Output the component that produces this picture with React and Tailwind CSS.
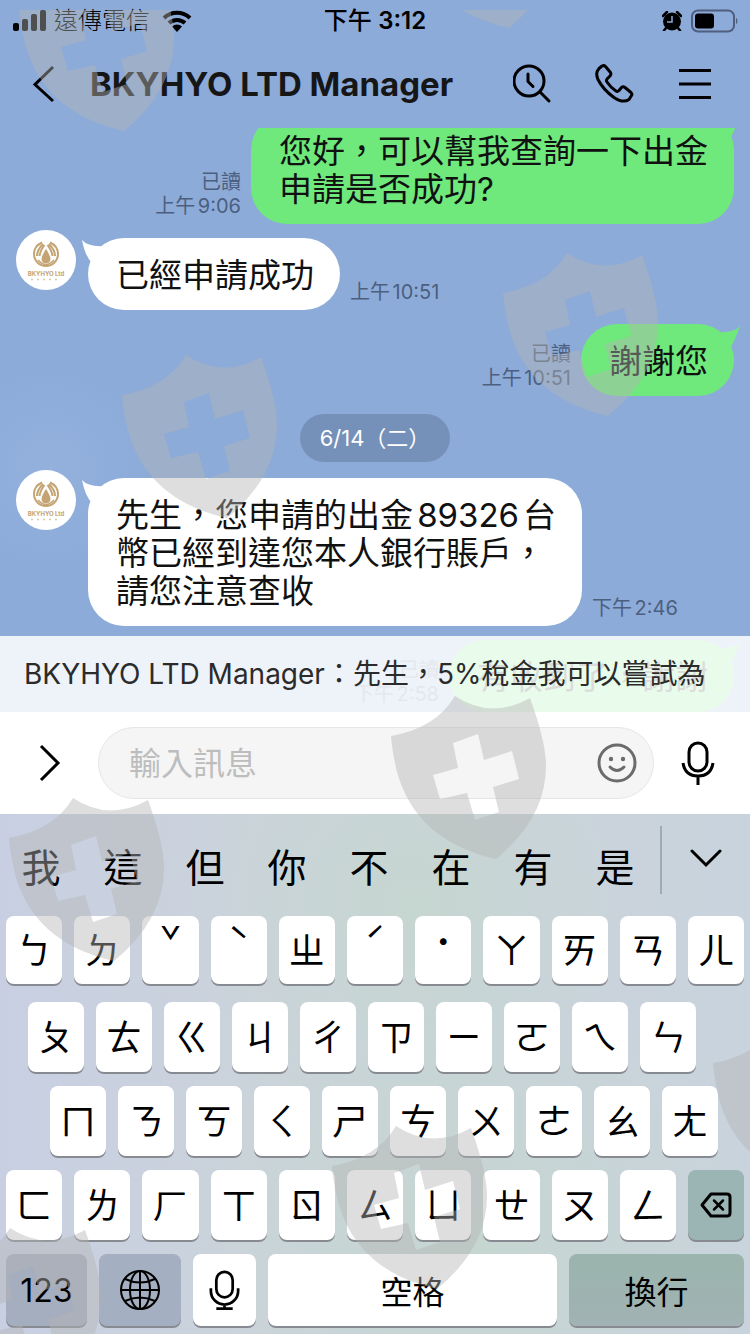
import React, { useState } from 'react';
import clsx from 'clsx';

const MESSAGES = [
  { id: 1, from: 'me', lines: ['您好，可以幫我查詢一下出金', '申請是否成功?'], time: '上午9:06' },
  { id: 2, from: 'manager', lines: ['已經申請成功'], time: '上午10:51' },
  { id: 3, from: 'me', lines: ['謝謝您'], time: '上午10:51' },
  { id: 4, date: '6/14（二）' },
  { id: 5, from: 'manager', lines: ['先生，您申請的出金89326台', '幣已經到達您本人銀行賬戶，', '請您注意查收'], time: '下午2:46' },
  { id: 6, from: 'me', lines: ['有收到了，謝謝'], time: '下午2:58' },
];

const CANDIDATES = ['我', '這', '但', '你', '不', '在', '有', '是'];

const KEY_ROWS = [
  ['ㄅ', 'ㄉ', 'ˇ', 'ˋ', 'ㄓ', 'ˊ', '˙', 'ㄚ', 'ㄞ', 'ㄢ', 'ㄦ'],
  ['ㄆ', 'ㄊ', 'ㄍ', 'ㄐ', 'ㄔ', 'ㄗ', 'ㄧ', 'ㄛ', 'ㄟ', 'ㄣ'],
  ['ㄇ', 'ㄋ', 'ㄎ', 'ㄑ', 'ㄕ', 'ㄘ', 'ㄨ', 'ㄜ', 'ㄠ', 'ㄤ'],
  ['ㄈ', 'ㄌ', 'ㄏ', 'ㄒ', 'ㄖ', 'ㄙ', 'ㄩ', 'ㄝ', 'ㄡ', 'ㄥ'],
];

// Tone marks sit near the top of their key
const TONES = ['ˇ', 'ˋ', 'ˊ', '˙'];

// Top left corner of every shield in the watermark
const SHIELDS = [
  [19, -42],
  [404, -145],
  [122, 345],
  [503, 243],
  [391, 686],
  [9, 788],
  [713, 1013],
  [332, 1116],
  [-54, 1218],
];

const StatusBar = () => (
  <div className="grid h-10 grid-cols-3 items-center px-3 pt-0.5">
    <div className="flex items-center">
      <svg className="h-6 w-[34px]" viewBox="0 0 34 24" fill="black">
        <rect x="1" y="14" width="6" height="8" rx="2" />
        <rect x="10" y="10" width="6" height="12" rx="2" />
        <rect x="19" y="5" width="6" height="17" rx="2" />
        <rect x="28" y="1" width="6" height="21" rx="2" />
      </svg>
      <span className="ml-2 text-2xl leading-6 font-light">遠傳電信</span>
      <svg className="ml-3 h-[22px] w-[30px]" viewBox="0 0 30 22">
        <path d="M2 8a19 19 0 0 1 26 0" fill="none" stroke="black" strokeWidth="4" />
        <path d="M7 13a12 12 0 0 1 16 0" fill="none" stroke="black" strokeWidth="4" />
        <path d="M15 22l-5-5.500a7 7 0 0 1 10 0z" />
      </svg>
    </div>
    <div className="text-center text-2xl leading-6 font-medium">
      下午 <span className="font-semibold">3:12</span>
    </div>
    <div className="flex items-center justify-end gap-2">
      <svg className="h-5 w-5" viewBox="0 0 20 20">
        <circle cx="10" cy="10.500" r="9" />
        <path d="M1 5l4-4M19 5l-4-4M4 17l-2 2.500M16 17l2 2.500" stroke="black" strokeWidth="2.500" strokeLinecap="round" />
        <path d="M10 5v6H5" fill="none" stroke="#8cabd9" strokeWidth="1.500" />
      </svg>
      <svg className="h-6 w-12" viewBox="0 0 48 24">
        <rect x="2" y="1.500" width="42" height="21" rx="6" fill="none" stroke="#4f5f7d" strokeWidth="2" />
        <rect x="5" y="4.500" width="19" height="15" rx="3" />
        <path d="M46 8.500q3 3.500 0 7z" fill="#4f5f7d" />
      </svg>
    </div>
  </div>
);

const Header = () => (
  <header className="flex h-[88px] items-center pl-8 pr-[37px]">
    <button aria-label="返回" className="h-10 w-6">
      <svg className="h-10 w-6" viewBox="0 0 24 40" fill="none" stroke="black" strokeWidth="3">
        <path d="M21 3L3 20.500 21 37" />
      </svg>
    </button>
    <h1 className="ml-[34px] flex-1 truncate text-[33px] leading-10 font-bold text-[#161616]">BKYHYO LTD Manager</h1>
    <button aria-label="搜尋">
      <svg className="h-10 w-10" viewBox="0 0 40 40" fill="none" stroke="black" strokeWidth="3" strokeLinecap="round">
        <circle cx="16" cy="17" r="15" />
        <path d="M27 28l9 9" />
        <path d="M15 10v7.500l5 5" strokeLinejoin="round" />
      </svg>
    </button>
    <button aria-label="通話" className="ml-[42px]">
      <svg className="h-10 w-10" viewBox="0 0 40 40" fill="none" stroke="black" strokeWidth="3" strokeLinejoin="round">
        <path d="M4 4.500l3-2.500q2-1 3.500.500l5 6q1 2-.500 3.500l-3 3q-1 1.500 0 3 4 6 9 9 1.500 1 3-.500l2.500-3q1.500-1.500 3.500 0l6 5q1.500 1.500.500 3l-2.500 4q-6 4-15-2-11-8-16-18Q0 9 4 4.500z" />
      </svg>
    </button>
    <button aria-label="選單" className="ml-[42px]">
      <svg className="h-9 w-9" viewBox="0 0 36 36" fill="none" stroke="black" strokeWidth="3">
        <path d="M2 4.500h32M2 18h32M2 31.500h32" />
      </svg>
    </button>
  </header>
);

const Avatar = () => (
  <div className="flex size-[60px] shrink-0 flex-col items-center rounded-full bg-white pt-[11px]">
    <svg className="h-[27px] w-7" viewBox="0 0 28 27" fill="none" stroke="#c4a472">
      <path d="M10 1.500Q2 5 2 13a12 12 0 0 0 24 0q0-8-8-11.500" strokeWidth="2" />
      <path d="M11 3Q5 9 5 15M12.500 4Q8 10 7.500 15M17 3q6 6 6 12M15.500 4q4.500 6 5 11" strokeWidth="2" />
      <path d="M14 7q-5 8-5 11a5 5 0 0 0 10 0q0-3-5-11z" fill="#c4a472" stroke="white" />
      <path d="M6 19q8 9 16 0" strokeWidth="1.500" />
    </svg>
    <span className="mt-0.5 text-[6px] leading-2 font-bold whitespace-nowrap text-[#c4a472]">BKYHYO Ltd</span>
    <svg className="h-1 w-[30px]" viewBox="0 0 30 4">
      <path d="M0 1.500h30" stroke="#d8c8ac" strokeWidth="1.500" strokeDasharray="2 4" />
    </svg>
  </div>
);

const Bubble = ({ mine, lines }) => (
  <div
    className={clsx(
      'relative rounded-[36px] pt-[18px] pb-4 pl-7 pr-[26px] text-[33px] leading-[38px] whitespace-nowrap text-[#111111]',
      mine ? 'bg-[#6fe87c]' : 'bg-white'
    )}
  >
    {mine ? (
      <svg className="absolute -right-1.5 top-0.5 h-6 w-8" viewBox="0 0 32 24" fill="#6fe87c">
        <path d="M32 0Q26 7 10 6L2 14l20 9Q26 16 32 0z" />
      </svg>
    ) : (
      <svg className="absolute -left-1.5 top-0.5 h-6 w-8" viewBox="0 0 32 24" fill="white">
        <path d="M0 0Q6 7 22 6l8 8-20 9Q3 16 0 0z" />
      </svg>
    )}
    {lines.map((line) => (
      <p key={line}>{line}</p>
    ))}
  </div>
);

const Message = ({ message }) => {
  const { from, lines, time, date } = message;

  if (date) {
    return (
      <div className="mt-[18px] mb-0.5 flex justify-center">
        <span className="rounded-full bg-[#7691b9] px-5 text-[22px] leading-[48px] text-white">{date}</span>
      </div>
    );
  }

  if (from === 'me') {
    return (
      <div className="mt-3.5 flex items-end justify-end gap-2.5 pr-4">
        <div className="mb-1.5 text-right text-xl leading-6 text-[#4d5f7e]">
          <p>已讀</p>
          <p>{time}</p>
        </div>
        <Bubble mine lines={lines} />
      </div>
    );
  }

  return (
    <div className="mt-1.5 flex items-start pl-4">
      <Avatar />
      <div className="ml-3 mt-2 flex items-end gap-2.5">
        <Bubble lines={lines} />
        <p className="mb-1.5 text-xl leading-6 text-[#4d5f7e]">{time}</p>
      </div>
    </div>
  );
};

const MicIcon = ({ className, stand }) => (
  <svg className={className} viewBox="0 0 34 44" fill="none" stroke="black" strokeWidth="3">
    <rect x="8" y="2" width="18" height="28" rx="9" />
    {stand ? (
      <path d="M2 20v3a15 15 0 0 0 30 0v-3M17 38v5M8 42.500h18" />
    ) : (
      <path d="M2 22q2 13 15 13t15-13M17 35v9" />
    )}
  </svg>
);

const InputBar = () => {
  const [text, setText] = useState('');

  return (
    <div className="flex h-[102px] items-center bg-white pl-[38px] pr-[35px]">
      <button aria-label="展開" className="w-6">
        <svg className="h-10 w-6" viewBox="0 0 24 40" fill="none" stroke="black" strokeWidth="3">
          <path d="M3 3l17 17L3 37" />
        </svg>
      </button>
      <div className="ml-9 flex h-[72px] min-w-0 flex-1 items-center rounded-full border border-[#e6e6e6] bg-[#f5f5f5] pl-[30px] pr-4">
        <input
          aria-label="輸入訊息"
          placeholder="輸入訊息"
          value={text}
          onChange={(e) => setText(e.target.value)}
          className="min-w-0 flex-1 bg-transparent pt-0.5 text-[32px] leading-10 outline-none placeholder:text-[#bdbdbd]"
        />
        <button aria-label="表情貼" className="shrink-0">
          <svg className="h-10 w-10" viewBox="0 0 40 40" fill="none" stroke="#6b6b6b" strokeWidth="3">
            <circle cx="20" cy="20" r="18" />
            <path d="M13 24q7 7 14 0" strokeLinecap="round" />
            <circle cx="14" cy="16" r="2.200" fill="#6b6b6b" stroke="none" />
            <circle cx="26" cy="16" r="2.200" fill="#6b6b6b" stroke="none" />
          </svg>
        </button>
      </div>
      <button aria-label="語音訊息" className="ml-[27px] shrink-0">
        <MicIcon className="h-11 w-[34px]" />
      </button>
    </div>
  );
};

const Key = ({ label, className, children }) => (
  <button
    aria-label={label}
    className={clsx('flex min-w-0 items-center justify-center rounded-lg shadow-[0_2px_0_#878b91]', className)}
  >
    {children}
  </button>
);

const LetterKeys = ({ keys }) =>
  keys.map((key) => (
    <Key key={key} className={clsx('flex-1 bg-white text-4xl leading-none', TONES.includes(key) ? 'pb-5' : 'pb-1')}>
      {key}
    </Key>
  ));

const Keyboard = () => (
  <div className="bg-[radial-gradient(ellipse_at_55%_18%,#c6d6d0_0%,transparent_38%),radial-gradient(ellipse_at_62%_82%,#c5d6d0_0%,transparent_45%),linear-gradient(90deg,#c8cfe2_0%,#cbd3db_35%,#c9d3dd_100%)] px-1.5 pb-2 font-['Noto_Sans_CJK_TC',sans-serif]">
    <div className="-mx-1.5 flex h-[102px] items-start">
      <div className="mr-1 grid flex-1 grid-cols-8">
        {CANDIDATES.map((word) => (
          <button key={word} className="h-[102px] text-[39px] leading-none">
            {word}
          </button>
        ))}
      </div>
      <div className="mt-3 h-[68px] w-0.5 bg-[#a3abb2]" />
      <button aria-label="更多候選字" className="flex h-[88px] w-[88px] items-center justify-center">
        <svg className="h-5 w-8" viewBox="0 0 32 20" fill="none" stroke="black" strokeWidth="3" strokeLinecap="round">
          <path d="M2 3l14 14L30 3" />
        </svg>
      </button>
    </div>

    <div className="flex h-[68px] gap-3">
      <LetterKeys keys={KEY_ROWS[0]} />
    </div>
    <div className="mt-[18px] flex h-[70px] gap-3 pl-[22px] pr-12">
      <LetterKeys keys={KEY_ROWS[1]} />
    </div>
    <div className="mt-3.5 flex h-[70px] gap-3 pl-11 pr-[26px]">
      <LetterKeys keys={KEY_ROWS[2]} />
    </div>
    <div className="mt-3.5 flex h-[70px] gap-3">
      <LetterKeys keys={KEY_ROWS[3]} />
      <Key label="刪除" className="flex-1 bg-[#9ab5b3]">
        <svg className="h-[26px] w-8" viewBox="0 0 32 26" fill="none" stroke="black" strokeWidth="3" strokeLinejoin="round" strokeLinecap="round">
          <path d="M11 2h16q3 0 3 3v16q0 3-3 3H11L2 13z" />
          <path d="M14 8.500l9 9M23 8.500l-9 9" strokeWidth="2.500" />
        </svg>
      </Key>
    </div>
    <div className="mt-3.5 flex h-[72px] gap-3">
      <Key className="w-[81px] bg-[#a5aebf] pt-0.5 font-[Inter,sans-serif] text-[32px]">123</Key>
      <Key label="切換鍵盤" className="w-[82px] bg-[#a4afc1]">
        <svg className="h-10 w-10" viewBox="0 0 40 40" fill="none" stroke="black" strokeWidth="2">
          <circle cx="20" cy="20" r="19" />
          <ellipse cx="20" cy="20" rx="10" ry="19" />
          <path d="M20 1v38M1 20h38M5 9q15 7 30 0M5 31q15-7 30 0" />
        </svg>
      </Key>
      <Key label="聽寫" className="w-[63px] bg-white">
        <MicIcon stand className="h-10 w-[31px]" />
      </Key>
      <Key className="flex-1 bg-white text-[32px]">空格</Key>
      <Key className="w-[175px] bg-linear-to-b from-[#9ab5ad] to-[#a1b2b3] text-[32px]">換行</Key>
    </div>
  </div>
);

const Watermark = () => (
  <div className="pointer-events-none absolute inset-x-0 top-2.5 bottom-0 overflow-hidden">
    <svg className="h-full w-full" fill="#b4b4b4" fillOpacity="0.44" fillRule="evenodd">
      {SHIELDS.map(([x, y]) => (
        <path
          key={`${x}-${y}`}
          transform={`translate(${x} ${y})`}
          d="M0 40Q45 32 64 0q36 24 75 2 16 44 16 68 0 52-50 93Q25 145 6 76 1 55 0 40zM62 47l25-9 6 26 28-9 7 28-26 8 6 25-24 8-8-27-27 6-7-24 25-7z"
        />
      ))}
    </svg>
  </div>
);

export default function App() {
  return (
    <div className="relative flex h-screen flex-col overflow-hidden bg-[#8cabd9] font-[Inter,'Noto_Sans_CJK_TC',sans-serif] text-black [text-autospace:normal]">
      <StatusBar />
      <Header />

      <main className="relative flex min-h-0 flex-1 flex-col justify-end overflow-hidden bg-[radial-gradient(circle_at_50px_340px,#94b1dd_0%,transparent_100px)]">
        {MESSAGES.map((message) => (
          <Message key={message.id} message={message} />
        ))}
        {/* New message preview, lies over the end of the conversation */}
        <div className="absolute inset-x-0 bottom-0 flex h-[76px] items-center bg-white/85 px-6">
          <p className="truncate text-[28px] leading-9 text-[#2b2b2b]">BKYHYO LTD Manager：先生，5%稅金我可以嘗試為</p>
        </div>
      </main>

      <InputBar />
      <Keyboard />
      <Watermark />
    </div>
  );
}
